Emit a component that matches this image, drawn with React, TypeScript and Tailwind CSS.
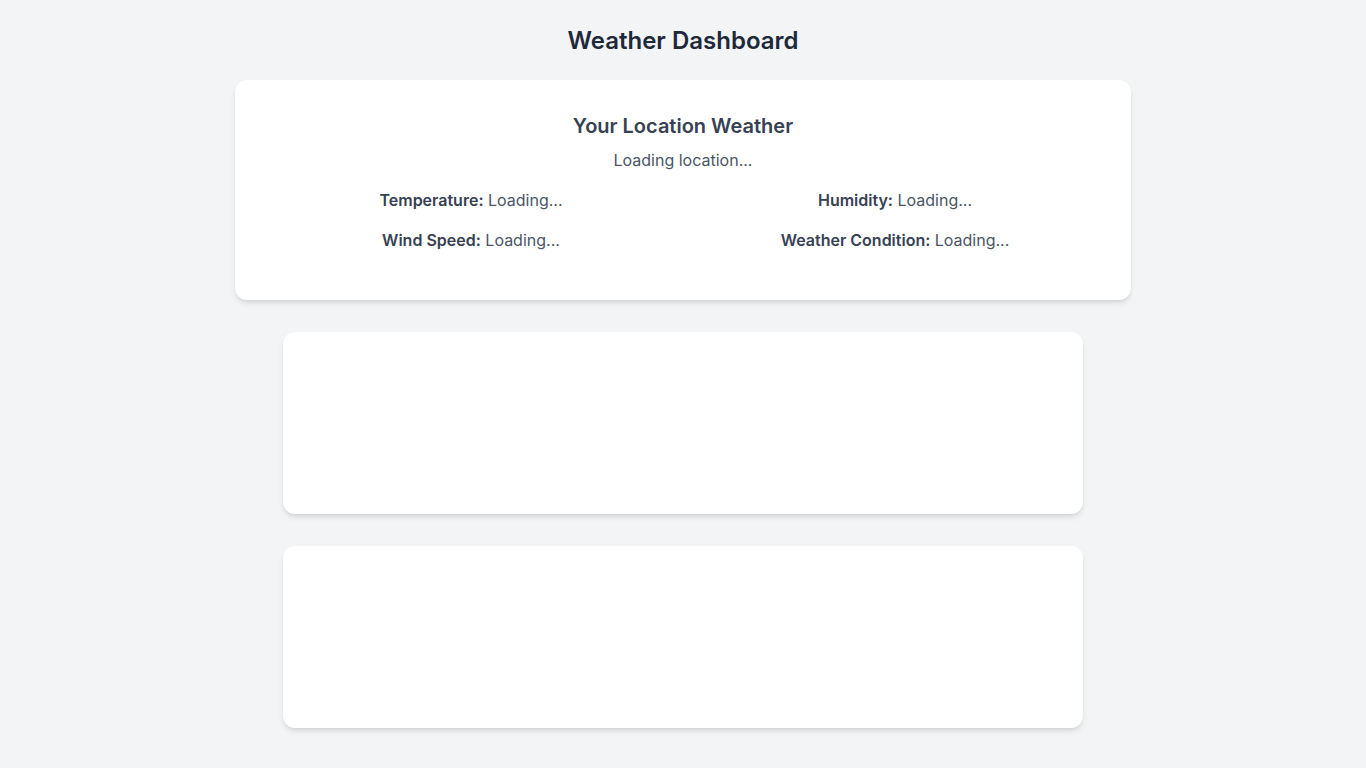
export default function App() {
  return (
    <div className="min-h-screen bg-gray-100 p-6" style={{ fontFamily: "Inter, 'Noto Sans', sans-serif" }}>
      <h1 className="text-2xl leading-[34px] font-semibold text-gray-800 text-center mb-[22px]">Weather Dashboard</h1>
      <div className="max-w-4xl mx-auto bg-white rounded-xl shadow-md p-8 pb-12 mb-8 text-center">
        <h2 className="text-xl font-semibold text-gray-700 mb-2">Your Location Weather</h2>
        <p className="text-gray-600 mb-4">Loading location...</p>
        <div className="grid grid-cols-2 gap-4 text-gray-600">
          <p><span className="font-semibold text-gray-700">Temperature:</span> Loading...</p>
          <p><span className="font-semibold text-gray-700">Humidity:</span> Loading...</p>
          <p><span className="font-semibold text-gray-700">Wind Speed:</span> Loading...</p>
          <p><span className="font-semibold text-gray-700">Weather Condition:</span> Loading...</p>
        </div>
      </div>
      <div className="max-w-[800px] mx-auto bg-white rounded-xl shadow-md h-[182px] mb-8"></div>
      <div className="max-w-[800px] mx-auto bg-white rounded-xl shadow-md h-[182px] mb-8"></div>
    </div>
  );
}
